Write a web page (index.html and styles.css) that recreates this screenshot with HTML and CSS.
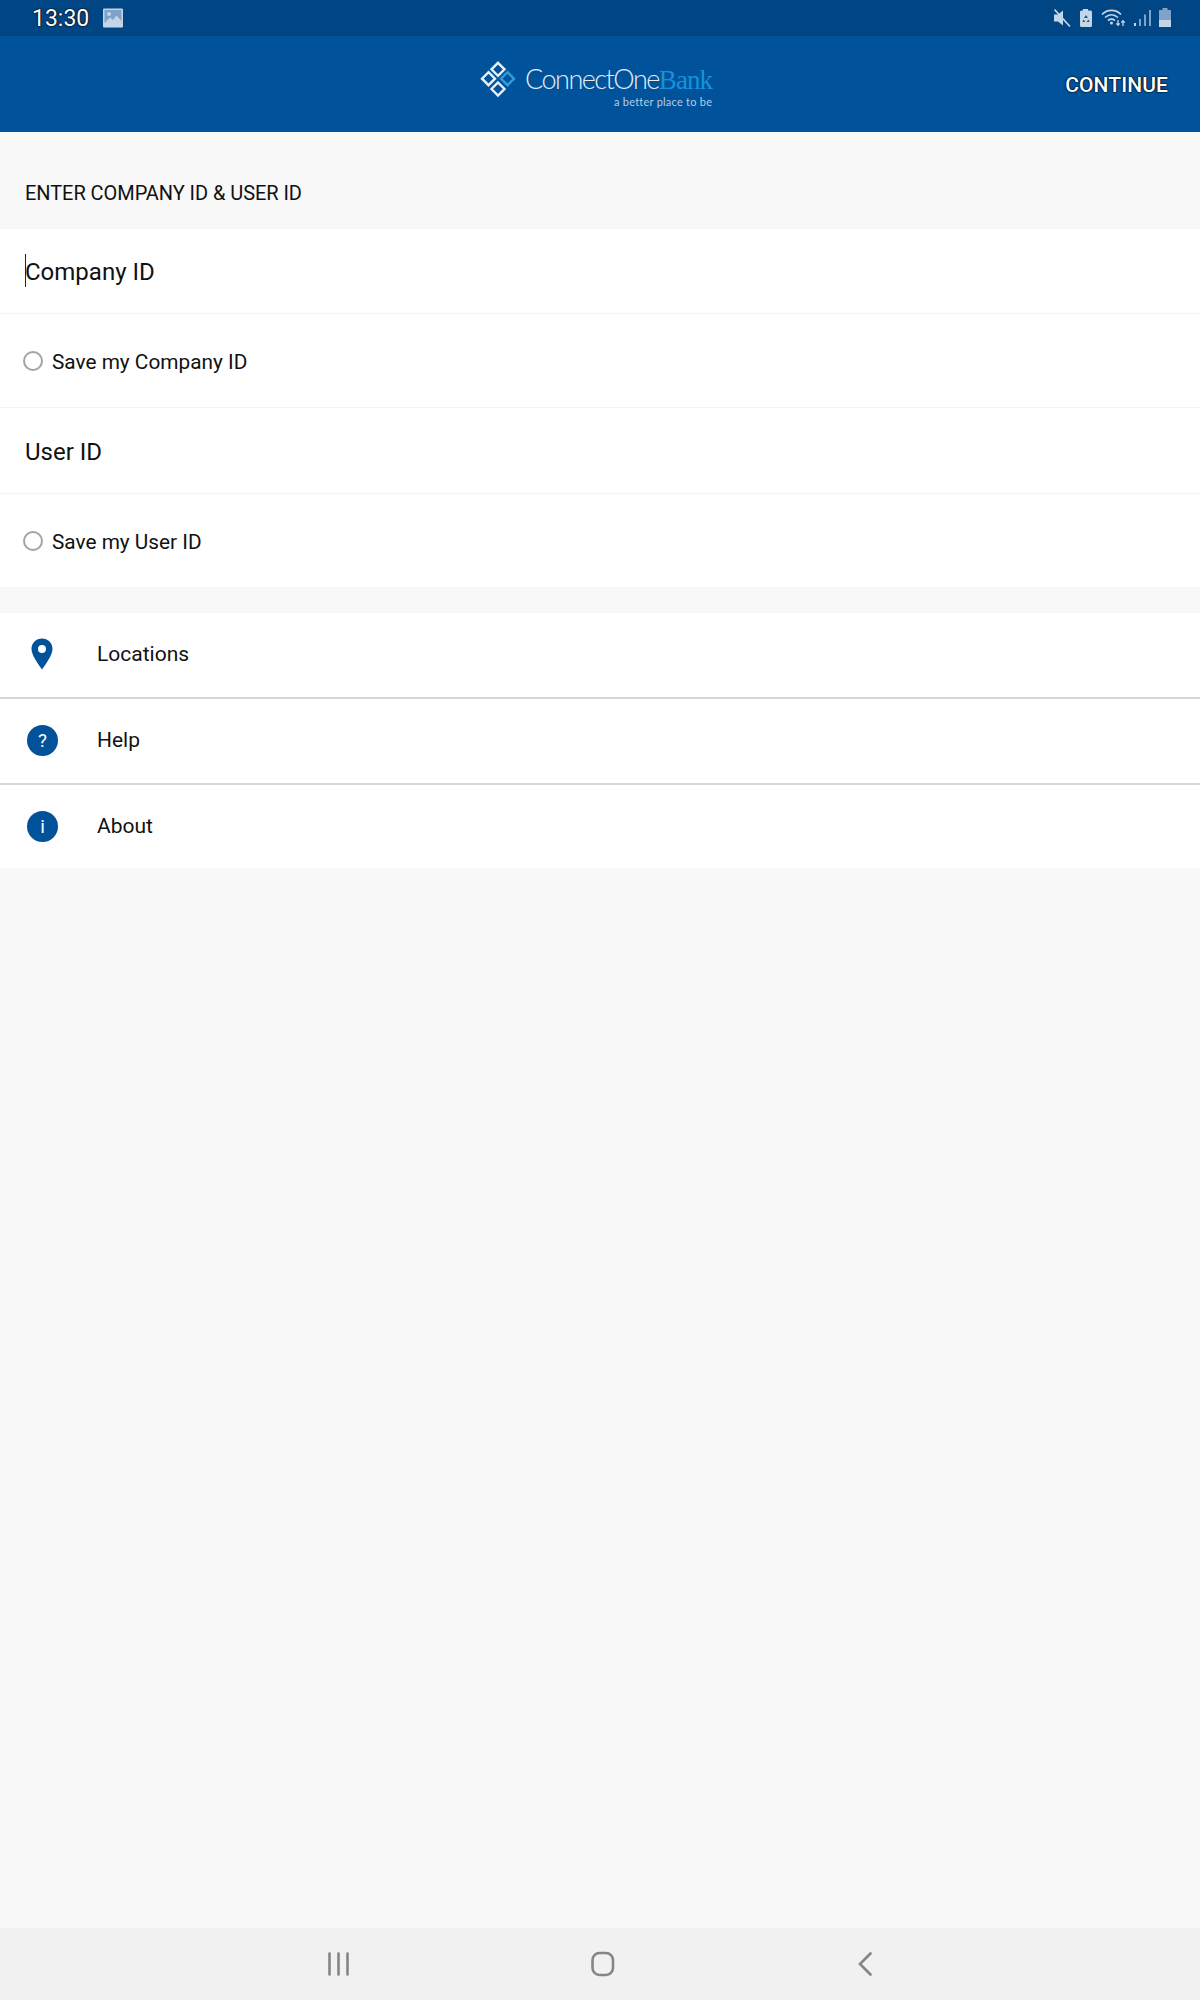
FILE: index.html
```html
<!DOCTYPE html>
<html lang="en">
<head>
<meta charset="utf-8">
<title>ConnectOne Bank</title>
<link rel="stylesheet" href="styles.css">
</head>
<body>
<div class="screen">
  <div class="status">
    <div class="status-left">
      <span class="clock">13:30</span>
      <svg class="pic" width="20" height="20" viewBox="0 0 20 20"><rect width="20" height="19" y="0.5" rx="1" fill="#c4d5e8"/><rect x="1.5" y="2" width="17" height="13" fill="#7fa3c8"/><circle cx="6" cy="6" r="2" fill="#c4d5e8"/><path d="M1.5 15 L7 9.5 L10 12 L13.5 7.5 L18.5 13 V17 H1.5 Z" fill="#c4d5e8"/></svg>
    </div>
    <div class="status-right">
      <svg width="18" height="20" viewBox="0 0 18 20"><path d="M1 6.5H5L10 2.5V17.5L5 13.5H1Z" fill="#c4d5e8"/><path d="M1.5 1.5L17 18.5" stroke="#c4d5e8" stroke-width="1.8"/></svg>
      <svg width="14" height="20" viewBox="0 0 14 20"><path d="M4 2.5V1h5v1.5h2.5a1.5 1.5 0 0 1 1.5 1.5v13.5a1.5 1.5 0 0 1-1.5 1.5h-9A1.5 1.5 0 0 1 1 17.5V4a1.5 1.5 0 0 1 1.5-1.5Z" fill="#c4d5e8"/><path d="M7 7l2 3H5ZM4.5 11.5l1.8 2.5H3.5ZM9.5 11.5l1.2 2.5H7.5Z" fill="#27578f"/></svg>
      <svg width="25" height="20" viewBox="0 0 25 20"><path d="M1 6.5C6 1 15 1 20 6.5M4 9.5C8 6 13 6 17 9.5M7 12.5c2-1.5 5-1.500 7 0" fill="none" stroke="#c4d5e8" stroke-width="1.600"/><circle cx="10.500" cy="15" r="1.500" fill="#c4d5e8"/><path d="M17 12v5M15.300 15.300l1.700 2 1.700-2M22 18v-5M20.300 14.700l1.700-2 1.700 2" fill="none" stroke="#c4d5e8" stroke-width="1.300"/></svg>
      <svg width="17" height="20" viewBox="0 0 17 20"><rect x="0" y="15" width="2" height="3" fill="#c4d5e8"/><rect x="5" y="11" width="2" height="7" fill="#7fa3c8"/><rect x="10" y="6.500" width="2" height="11.500" fill="#7fa3c8"/><rect x="15" y="2" width="2" height="16" fill="#7fa3c8"/></svg>
      <svg width="12" height="20" viewBox="0 0 12 20"><path d="M3.500 0h5v2H12v17H0V2h3.500Z" fill="#7fa3c8"/><rect y="12" width="12" height="7" fill="#c4d5e8"/></svg>
    </div>
  </div>

  <header class="appbar">
    <div class="logo">
      <svg class="logo-mark" width="38" height="38" viewBox="0 0 38 38">
        <g fill="none" stroke-width="2.400">
          <path d="M18 1.800L24.500 8.300L18 14.800L11.500 8.300Z" stroke="#e6eef7"/>
          <path d="M8.500 11.200L15 17.700L8.500 24.200L2 17.700Z" stroke="#e6eef7"/>
          <path d="M18 21.500L24.500 28L18 34.500L11.500 28Z" stroke="#e6eef7"/>
          <path d="M27.500 11.200L34 17.700L27.500 24.200L21 17.700Z" stroke="#2f9bdc"/>
        </g>
      </svg>
      <div class="logo-text">
        <div class="wordmark"><span class="w-one">ConnectOne</span><span class="w-bank">Bank</span></div>
        <div class="tagline">a better place to be</div>
      </div>
    </div>
    <span class="continue">CONTINUE</span>
  </header>

  <main class="content">
    <div class="section-title">ENTER COMPANY ID &amp; USER ID</div>

    <section class="form">
      <div class="field"><span class="caret"></span><span>Company ID</span></div>
      <div class="save"><span class="radio"></span><span>Save my Company ID</span></div>
      <div class="field field-user"><span>User ID</span></div>
      <div class="save save-last"><span class="radio"></span><span>Save my User ID</span></div>
    </section>

    <nav class="menu">
      <div class="menu-row">
        <span class="menu-icon">
          <svg width="22" height="32" viewBox="0 0 22 32"><path fill-rule="evenodd" d="M11 0.500C5 0.500 0.500 5 0.500 11C0.500 17 6.500 25 11 31.500C15.500 25 21.500 17 21.500 11C21.500 5 17 0.500 11 0.500ZM11 7A4 4 0 1 1 11 15A4 4 0 1 1 11 7Z" fill="#00529b"/></svg>
        </span>
        <span>Locations</span>
      </div>
      <div class="menu-row">
        <span class="menu-icon"><span class="disc">?</span></span>
        <span>Help</span>
      </div>
      <div class="menu-row menu-row-last">
        <span class="menu-icon"><span class="disc">i</span></span>
        <span>About</span>
      </div>
    </nav>
  </main>

  <footer class="navbar">
    <svg width="24" height="24" viewBox="0 0 24 24"><path d="M2.500 1.500V22.500M11.500 1.500V22.500M20.500 1.500V22.500" stroke="#858585" stroke-width="2.600" stroke-linecap="round"/></svg>
    <svg width="24" height="26" viewBox="0 0 24 26"><rect x="1.500" y="2" width="20.500" height="22" rx="7" fill="none" stroke="#858585" stroke-width="2.600"/></svg>
    <svg width="14" height="24" viewBox="0 0 14 24"><path d="M12.500 1.500L2 12L12.500 22.500" fill="none" stroke="#858585" stroke-width="2.600" stroke-linecap="round"/></svg>
  </footer>
</div>
</body>
</html>
```

FILE: styles.css
```css
* { box-sizing: border-box; }
html, body { margin: 0; padding: 0; }
body { font-family: Roboto, "Liberation Sans", sans-serif; color: #111; background: #f8f8f8; }
.screen { width: 1200px; height: 2000px; display: flex; flex-direction: column; }

.status { height: 36px; background: #004684; display: flex; justify-content: space-between; align-items: center; padding: 0 30px 0 32px; }
.status-left { display: flex; align-items: center; gap: 14px; }
.clock { font-size: 23px; color: #fff; text-shadow: 0 0 2px #000, 0 0 1px #000, 0 0 1px #000; margin-top: 1px; }
.status-right { display: flex; align-items: center; gap: 8px; margin-right: -1px; }
.status-right svg, .status-left svg { display: block; }

.appbar { height: 96px; background: #00529b; display: flex; align-items: center; justify-content: space-between; padding-right: 32px; position: relative; }
.logo { position: absolute; left: 480px; top: 25px; display: flex; gap: 7px; }
.logo-text { display: flex; flex-direction: column; align-items: flex-end; }
.wordmark { font-size: 27px; line-height: 32px; letter-spacing: -1.500px; white-space: nowrap; margin-top: 2px; }
.w-one { font-family: Lato, sans-serif; font-weight: 300; color: #e4edf6; }
.w-bank { font-family: "Liberation Serif", serif; color: #1592dc; letter-spacing: -0.9px; }
.tagline { font-family: Lato, sans-serif; font-size: 11px; line-height: 13px; color: #b5cde6; letter-spacing: 0.24px; margin-top: -1px; }
.continue { margin-left: auto; margin-top: 2px; font-size: 21px; font-weight: 500; letter-spacing: 0.1px; color: #fff; text-shadow: 0 0 2px #000, 0 0 1px #000, 0 0 1px #000; }

.content { flex: 1; }
.section-title { height: 97px; padding: 48px 0 0 25px; font-size: 20px; letter-spacing: -0.06px; line-height: 26px; color: #111; }

.form { background: #fff; }
.field { height: 85px; display: flex; align-items: center; padding: 2px 0 0 25px; font-size: 24px; color: #111; border-bottom: 1px solid #f3f3f3; position: relative; }
.field-user { height: 86px; padding-top: 3px; }
.caret { position: absolute; left: 25px; top: 25px; width: 1px; height: 33px; background: #222; }
.save { height: 94px; display: flex; align-items: center; gap: 9px; padding: 2px 0 0 23px; font-size: 20.800px; color: #111; border-bottom: 1px solid #f3f3f3; }
.save-last { height: 93px; border-bottom: 0; }
.radio { width: 20px; height: 20px; border: 2px solid #a3a3a3; border-radius: 50%; background: #fff; margin-top: -2px; }

.menu { margin-top: 26px; background: #fff; }
.menu-row { height: 86px; display: flex; align-items: center; padding-bottom: 2px; font-size: 21px; color: #111; border-bottom: 2px solid #d6d6d6; }
.menu-row-last { height: 83px; padding-bottom: 1px; border-bottom: 0; }
.menu-icon { width: 97px; padding-left: 27px; display: flex; }
.menu-icon svg { display: block; margin-left: 4px; }
.disc { width: 31px; height: 31px; border-radius: 50%; background: #00529b; color: #fff; font-size: 19px; font-weight: 400; line-height: 31px; text-align: center; }

.navbar { height: 72px; background: #f1f1f1; display: flex; align-items: center; position: relative; }
.navbar svg { position: absolute; top: 24px; }
.navbar svg:nth-child(1) { left: 327px; }
.navbar svg:nth-child(2) { left: 591px; top: 23px; }
.navbar svg:nth-child(3) { left: 858px; }
```
